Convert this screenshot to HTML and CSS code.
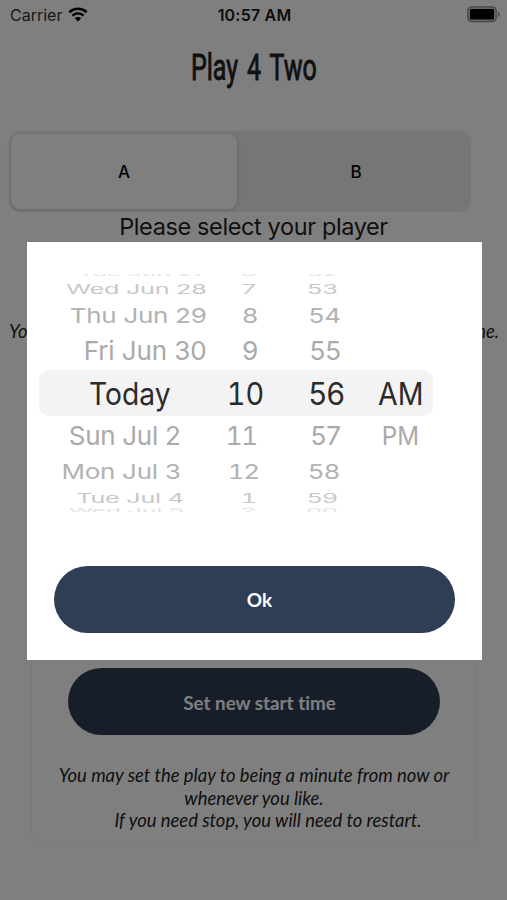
FILE: index.html
```html
<!DOCTYPE html>
<html lang="en">
<head>
<meta charset="utf-8">
<meta name="viewport" content="width=device-width">
<title>Play 4 Two</title>
<link rel="stylesheet" href="styles.css">
</head>
<body>
<div class="page">
  <header class="status">
    <div class="carrier">
      <span>Carrier</span>
      <svg class="wifi" viewBox="0 0 20 15" aria-hidden="true">
        <path d="M1.3 5.2C6.3.7 13.7.7 18.7 5.2M4.4 8.6c3.3-2.9 7.9-2.9 11.2 0" fill="none" stroke="#000" stroke-width="2.5"/>
        <path d="M6.8 11.2c1.9-1.6 4.5-1.6 6.4 0L10 14.5z"/>
      </svg>
    </div>
    <div class="clock">10:57 AM</div>
    <svg class="battery" viewBox="0 0 33 17" aria-hidden="true">
      <rect x=".8" y=".8" width="28.4" height="14.9" rx="4" fill="#ccc" stroke="#8c8c8c" stroke-width="1.3"/>
      <rect x="3" y="3" width="24" height="10.5" rx="1.2"/>
      <path d="M31 5.5c2 .8 2 4.7 0 5.5z" fill="#8c8c8c"/>
    </svg>
  </header>
  <h1 class="title"><span>Play 4 Two</span></h1>
  <div class="segments">
    <div class="segment active">A</div>
    <div class="segment second">B</div>
  </div>
  <p class="prompt">Please select your player</p>
  <p class="hint"><span>You</span><span>time.</span></p>
  <section class="card">
    <button class="button">Set new start time</button>
    <p class="note">You may set the play to being a minute from now or<br>whenever you like.<br><span class="indent">If you need stop, you will need to restart.</span></p>
  </section>
</div>
<div class="overlay">
  <div class="modal">
    <div class="wheel">
      <div class="row r0"><span class="date">Tue Jun 27</span><span class="hour">6</span><span class="minute">52</span></div>
      <div class="row r1"><span class="date">Wed Jun 28</span><span class="hour">7</span><span class="minute">53</span></div>
      <div class="row r2"><span class="date">Thu Jun 29</span><span class="hour">8</span><span class="minute">54</span></div>
      <div class="row r3"><span class="date">Fri Jun 30</span><span class="hour">9</span><span class="minute">55</span></div>
      <div class="row r4"><span class="date">Today</span><span class="hour">10</span><span class="minute">56</span><span class="period">AM</span></div>
      <div class="row r5"><span class="date">Sun Jul 2</span><span class="hour">11</span><span class="minute">57</span><span class="period">PM</span></div>
      <div class="row r6"><span class="date">Mon Jul 3</span><span class="hour">12</span><span class="minute">58</span></div>
      <div class="row r7"><span class="date">Tue Jul 4</span><span class="hour">1</span><span class="minute">59</span></div>
      <div class="row r8"><span class="date">Wed Jul 5</span><span class="hour">2</span><span class="minute">00</span></div>
    </div>
    <button class="button">Ok</button>
  </div>
</div>
</body>
</html>
```
FILE: styles.css
```css
* { box-sizing: border-box; }
body {
  margin: 0;
  height: 900px;
  overflow: hidden;
  background: #fff;
  color: #000;
  font-family: Inter, "Liberation Sans", sans-serif;
}
p, h1 { margin: 0; }
.page { height: 900px; display: flex; flex-direction: column; }
.status {
  height: 30px;
  flex: none;
  display: grid;
  grid-template-columns: 1fr auto 1fr;
  align-items: center;
  padding: 0 7px 0 10px;
}
.carrier { display: flex; align-items: center; gap: 6px; font-size: 16px; letter-spacing: 0; color: #333; }
.wifi { width: 20px; height: 15px; margin-top: -2px; }
.clock { font-size: 16px; font-weight: 600; letter-spacing: .2px; color: #1a1a1a; margin-right: 1px; }
.battery { width: 33px; height: 17px; justify-self: end; margin-top: -2px; }
.title {
  height: 101px;
  padding-top: 16px;
  text-align: center;
  font: 400 36.5px/43px Roboto, sans-serif;
  color: #222;
}
.title span { display: inline-block; word-spacing: 4px; transform: scaleX(.685); -webkit-text-stroke: .9px #222; }
.segments {
  display: flex;
  flex: none;
  width: 462px;
  height: 81px;
  margin-left: 9px;
  padding: 3px 2px;
  border-radius: 11px;
  background: #ededee;
}
.segment {
  flex: 1;
  display: flex;
  align-items: center;
  justify-content: center;
  font-size: 17px;
  font-weight: 500;
  border-radius: 9px;
}
.segment.active { flex: 0 0 226px; background: #fff; box-shadow: 0 1px 4px rgba(0, 0, 0, .16); }
.segment.second { padding-left: 6px; }
.prompt { height: 107px; font-size: 23.5px; letter-spacing: -.38px; line-height: 30px; text-align: center; color: #222; }
.hint {
  display: flex;
  justify-content: space-between;
  height: 24px;
  padding: 0 8px 0 9px;
  font: italic 18.4px/24px Lato, sans-serif;
  color: #222;
}
.card {
  width: 448px;
  height: 501px;
  margin: 0 0 0 30px;
  padding: 323px 20px 0;
  border: 2px solid #f9f9f9;
  border-radius: 12px;
  display: flex;
  flex: none;
  flex-direction: column;
  align-items: center;
}
.button {
  height: 67px;
  border: 0;
  border-radius: 34px;
  background: #2f3d55;
  color: #fff;
  font: 700 19px Lato, sans-serif;
  font-variant-ligatures: none;
}
.card .button { width: 372px; flex: none; padding: 1px 0 0 11px; font-size: 18.8px; }
.note { margin-top: 29px; font: italic 18.4px/22.5px Lato, sans-serif; text-align: center; color: #222; white-space: nowrap; }
.indent { padding-left: 28px; }
.overlay { position: fixed; inset: 0; padding: 242px 25px 0 26.5px; background: rgba(0, 0, 0, .5); }
.modal { height: 418px; background: #fff; padding: 32px 26.5px 0 12px; }
.wheel { width: 394px; height: 238px; overflow: hidden; }
.row {
  display: grid;
  grid-template-columns: 168px 52px 82.5px 91.5px;
  grid-template-rows: 100%;
  align-items: center;
  font-size: 26px;
  line-height: 1;
  color: #aaa;
}
.row span { white-space: nowrap; justify-self: end; transform-origin: 100% 50%; }
.row .date { letter-spacing: -.3px; }
.row .hour { font-variant-numeric: tabular-nums; }
.row .period { justify-self: start; padding-left: 38px; transform-origin: 100% 50%; transform: scaleX(.93); }
.r0 { height: 8px; margin-top: -4px; color: #e2e2e2; }
.r1 { height: 22px; color: #c8c8c8; }
.r2 { height: 31px; color: #b2b2b2; }
.r3 { height: 39px; }
.r3 .date { letter-spacing: -.1px; }
.r4 { height: 46px; font-size: 31px; color: #2b2b2b; background: #f3f3f3; border-radius: 10px; }
.r5 { height: 40px; }
.r6 { height: 32px; color: #b2b2b2; }
.r7 { height: 19px; color: #c8c8c8; }
.r8 { height: 8px; color: #e2e2e2; }
.r0 span, .r8 span { transform: scale(.96, .25); }
.r1 span, .r7 span { transform: scale(.97, .51); }
.r2 span, .r6 span { transform: scaleY(.79); }
.r4 { grid-template-columns: 132px 94px 81px 87px; }
.r4 .date { letter-spacing: 0; transform: scaleX(.91); }
.r4 .hour { transform: scaleX(.93); }
.r4 .minute { transform: scaleX(.96); }
.r4 .period { padding-left: 28px; transform: scaleX(.92); }
.r5, .r6 { grid-template-columns: 142px 76px 84.5px 91.5px; }
.r5 .hour, .r6 .hour { letter-spacing: -1.5px; padding-right: 0; }
.r6 { grid-template-columns: 142px 78px 81.5px 92.5px; }
.r7, .r8 { grid-template-columns: 145px 73px 81px 95px; }
.r0, .r1 { grid-template-columns: 168px 50px 81px 95px; }
.modal .button { display: block; width: 401px; margin: 54px 0 0 15.5px; padding-left: 16px; }
```
